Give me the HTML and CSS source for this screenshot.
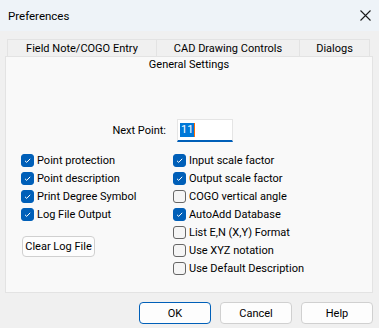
FILE: index.html
```html
<!DOCTYPE html>
<html lang="en">
<head>
  <meta charset="UTF-8">
  <title>Preferences</title>
  <link rel="stylesheet" href="styles.css">
</head>
<body>
  <div class="window">
    <div class="titlebar">
      <span class="title">Preferences</span>
      <svg class="close" width="11" height="11" viewBox="0 0 11 11">
        <path d="M0.5 0.5 L10.5 10.5 M10.5 0.5 L0.5 10.5" stroke="#1a1a1a" stroke-width="1.1" fill="none"/>
      </svg>
    </div>

    <div class="tabs">
      <div class="tab tab-wide">Field Note/COGO Entry</div>
      <div class="tab tab-mid">CAD Drawing Controls</div>
      <div class="tab tab-small">Dialogs</div>
    </div>

    <div class="panel">
      <div class="active-tab">General Settings</div>

      <div class="next-point">
        <label class="np-label">Next Point:</label>
        <div class="np-input"><span class="sel">11</span><span class="caret"></span></div>
      </div>

      <div class="options">
        <div class="col">
          <div class="check"><span class="box on"></span>Point protection</div>
          <div class="check"><span class="box on"></span>Point description</div>
          <div class="check"><span class="box on"></span>Print Degree Symbol</div>
          <div class="check"><span class="box on"></span>Log File Output</div>
          <button class="btn btn-clear">Clear Log File</button>
        </div>
        <div class="col">
          <div class="check"><span class="box on"></span>Input scale factor</div>
          <div class="check"><span class="box on"></span>Output scale factor</div>
          <div class="check"><span class="box"></span>COGO vertical angle</div>
          <div class="check"><span class="box on"></span>AutoAdd Database</div>
          <div class="check"><span class="box"></span>List E,N (X,Y) Format</div>
          <div class="check"><span class="box"></span>Use XYZ notation</div>
          <div class="check"><span class="box"></span>Use Default Description</div>
        </div>
      </div>
    </div>

    <div class="actions">
      <button class="btn btn-default">OK</button>
      <button class="btn">Cancel</button>
      <button class="btn">Help</button>
    </div>
  </div>
</body>
</html>
```

FILE: styles.css
```css
* {
  box-sizing: border-box;
}

body {
  margin: 0;
  background: #f0f0f0;
  font-family: Roboto, 'Liberation Sans', sans-serif;
  font-size: 11px;
  color: #000;
}

.window {
  width: 379px;
  height: 328px;
  display: flex;
  flex-direction: column;
}

.titlebar {
  height: 31px;
  background: #eef3f8;
  display: flex;
  align-items: center;
  justify-content: space-between;
  padding: 0 8px 0 8px;
}

.title {
  font-size: 11.5px;
}

.tabs {
  display: flex;
  margin: 8px 0 0 7px;
  height: 17px;
}

.tab {
  border: 1px solid #e3e3e3;
  border-bottom: none;
  border-right: none;
  background: #f0f0f0;
  text-align: center;
  line-height: 17px;
}

.tab-wide {
  width: 149px;
}

.tab-mid {
  width: 143px;
}

.tab-small {
  width: 71px;
  border-right: 1px solid #e3e3e3;
}

.panel {
  margin: 0 6px 0 5px;
  height: 237px;
  background: #f9f9f9;
  border: 1px solid #e3e3e3;
}

.active-tab {
  text-align: center;
  line-height: 16px;
  height: 16px;
}

.next-point {
  display: flex;
  align-items: center;
  margin-top: 46px;
  height: 23px;
}

.np-label {
  width: 160px;
  text-align: right;
  margin-right: 11px;
}

.np-input {
  width: 56px;
  height: 23px;
  background: #fff;
  border: 1px solid #e5e5e5;
  border-bottom: 2px solid #005fb8;
  display: flex;
  align-items: center;
  padding-left: 2px;
}

.sel {
  background: #0078d7;
  color: #fff;
  line-height: 14px;
  padding: 0 1px;
}

.caret {
  width: 1px;
  height: 14px;
  background: #ff6a00;
}

.options {
  display: flex;
  padding-left: 15px;
  margin-top: 9px;
}

.col {
  display: flex;
  flex-direction: column;
  align-items: flex-start;
}

.col:first-child {
  width: 152px;
}

.check {
  display: flex;
  align-items: center;
  height: 18px;
  white-space: nowrap;
}

.box {
  width: 13px;
  height: 13px;
  border: 1px solid #666;
  border-radius: 3px;
  background: #f5f5f5;
  margin-right: 3px;
}

.box.on {
  border-color: #005fb8;
  background: #005fb8 url("data:image/svg+xml;utf8,<svg xmlns='http://www.w3.org/2000/svg' width='11' height='11'><path d='M3 5.8 L4.7 7.4 L8.2 3.8' stroke='white' stroke-width='1' fill='none'/></svg>") center no-repeat;
}

.btn {
  font-family: inherit;
  font-size: 11px;
  color: #000;
  background: #fdfdfd;
  border: 1px solid #d0d0d0;
  border-radius: 4px;
  padding: 0;
  white-space: nowrap;
}

.btn-clear {
  margin: 13px 0 0 1px;
  width: 73px;
  height: 21px;
}

.actions {
  display: flex;
  justify-content: flex-end;
  gap: 9px;
  margin-top: 9px;
  padding-right: 6px;
}

.actions .btn {
  width: 72px;
  height: 22px;
}

.btn-default {
  border-color: #005fb8;
}
```
